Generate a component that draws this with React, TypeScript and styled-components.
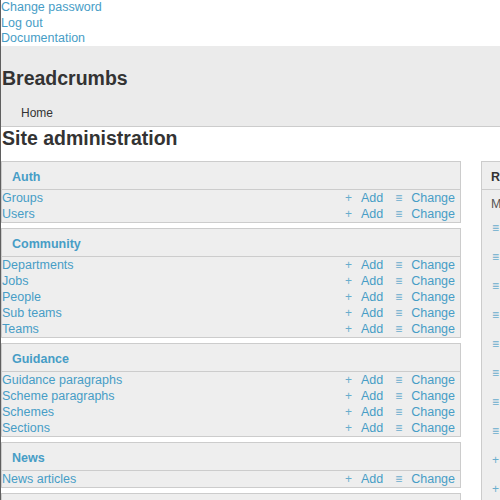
import React from 'react';
import styled, { createGlobalStyle } from 'styled-components';

const colors = {
  link: '#479dc6',
  text: '#333333',
  panel: '#eeeeee',
  header: '#ebebeb',
  border: '#cccccc',
  edge: '#5f5f5f',
};

const GlobalStyle = createGlobalStyle`
  html, body {
    margin: 0;
    padding: 0;
    background: #fff;
    overflow: hidden;
  }
  body {
    font-family: "Liberation Sans", Arial, sans-serif;
    color: ${colors.text};
  }
`;

const Page = styled.div`
  min-height: 100vh;
  border-left: 1px solid ${colors.edge};
  width: 700px;
`;

const UserTools = styled.div`
  display: flex;
  flex-direction: column;
  font-size: 12.5px;
  line-height: 15.5px;
  height: 46px;
`;

const Link = styled.a`
  color: ${colors.link};
  text-decoration: none;
`;

const Header = styled.header`
  background: ${colors.header};
  border-bottom: 1px solid ${colors.border};
  padding-top: 21px;
`;

const Title = styled.h1`
  margin: 0 0 0 1px;
  font-size: 19.5px;
  line-height: 23px;
  font-weight: bold;
  color: ${colors.text};
`;

const Crumbs = styled.div`
  padding: 16px 20px 6px;
  font-size: 12px;
  line-height: 14px;
  color: ${colors.text};
`;

const PageTitle = styled.h1`
  margin: 0 0 11px 1px;
  font-size: 19.5px;
  line-height: 23px;
  font-weight: bold;
  color: ${colors.text};
`;

const Columns = styled.div`
  display: flex;
  gap: 20px;
  align-items: flex-start;
`;

const MainColumn = styled.div`
  width: 460px;
  flex-shrink: 0;
  display: flex;
  flex-direction: column;
  gap: 5px;
`;

const SideColumn = styled.div`
  width: 200px;
  flex-shrink: 0;
`;

const Module = styled.section`
  background: ${colors.panel};
  border: 1px solid ${colors.border};
`;

const Caption = styled.h2<{ $dark?: boolean }>`
  margin: 0;
  height: 27px;
  line-height: 30px;
  overflow: hidden;
  padding-left: ${(p) => (p.$dark ? '9px' : '10px')};
  font-size: 12.5px;
  font-weight: bold;
  color: ${(p) => (p.$dark ? colors.text : colors.link)};
  border-bottom: 1px solid ${colors.border};
`;

const Row = styled.div`
  display: flex;
  align-items: center;
  height: 16px;
  font-size: 12.5px;
  padding: 0 5px 0 0;
`;

const RowName = styled(Link)`
  flex: 1;
`;

const Action = styled(Link)<{ $gap: number }>`
  display: flex;
  align-items: center;
  margin-left: ${(p) => p.$gap}px;
`;

const Glyph = styled.span`
  display: inline-block;
  width: 16px;
  font-size: 12px;
  color: ${colors.link};
  opacity: 0.8;
`;

const SubCaption = styled.h3`
  margin: 0;
  height: 24px;
  line-height: 28px;
  padding-left: 9px;
  font-size: 12.5px;
  font-weight: normal;
  color: #555;
`;

const ActionList = styled.ul`
  list-style: none;
  margin: 0;
  padding: 0 0 0 10px;
`;

const ActionItem = styled.li`
  height: 29px;
  line-height: 29px;
  font-size: 12.5px;
  color: ${colors.link};
  white-space: nowrap;
`;

interface ModelRow {
  name: string;
}

interface AppModule {
  title: string;
  models: ModelRow[];
}

const modules: AppModule[] = [
  { title: 'Auth', models: [{ name: 'Groups' }, { name: 'Users' }] },
  {
    title: 'Community',
    models: [
      { name: 'Departments' },
      { name: 'Jobs' },
      { name: 'People' },
      { name: 'Sub teams' },
      { name: 'Teams' },
    ],
  },
  {
    title: 'Guidance',
    models: [
      { name: 'Guidance paragraphs' },
      { name: 'Scheme paragraphs' },
      { name: 'Schemes' },
      { name: 'Sections' },
    ],
  },
  { title: 'News', models: [{ name: 'News articles' }] },
  { title: 'Sites', models: [{ name: 'Sites' }] },
];

const recent: { kind: 'change' | 'add'; label: string }[] = [
  { kind: 'change', label: 'Scheme paragraph' },
  { kind: 'change', label: 'Scheme paragraph' },
  { kind: 'change', label: 'Guidance paragraph' },
  { kind: 'change', label: 'Section' },
  { kind: 'change', label: 'Scheme' },
  { kind: 'change', label: 'Person' },
  { kind: 'change', label: 'Team' },
  { kind: 'change', label: 'Department' },
  { kind: 'add', label: 'News article' },
  { kind: 'add', label: 'Job' },
];

export default function App(): JSX.Element {
  return (
    <>
      <GlobalStyle />
      <Page>
        <UserTools>
          <Link href="#">Change password</Link>
          <Link href="#">Log out</Link>
          <Link href="#">Documentation</Link>
        </UserTools>
        <Header>
          <Title>Breadcrumbs</Title>
          <Crumbs>Home</Crumbs>
        </Header>
        <PageTitle>Site administration</PageTitle>
        <Columns>
          <MainColumn>
            {modules.map((m) => (
              <Module key={m.title}>
                <Caption>{m.title}</Caption>
                {m.models.map((row) => (
                  <Row key={row.name}>
                    <RowName href="#">{row.name}</RowName>
                    <Action href="#" $gap={14}>
                      <Glyph>+</Glyph>Add
                    </Action>
                    <Action href="#" $gap={12}>
                      <Glyph>≡</Glyph>Change
                    </Action>
                  </Row>
                ))}
              </Module>
            ))}
          </MainColumn>
          <SideColumn>
            <Module>
              <Caption $dark>Recent actions</Caption>
              <SubCaption>My actions</SubCaption>
              <ActionList>
                {recent.map((r, i) => (
                  <ActionItem key={i}>
                    <Glyph>{r.kind === 'add' ? '+' : '≡'}</Glyph>
                    {r.label}
                  </ActionItem>
                ))}
              </ActionList>
            </Module>
          </SideColumn>
        </Columns>
      </Page>
    </>
  );
}
